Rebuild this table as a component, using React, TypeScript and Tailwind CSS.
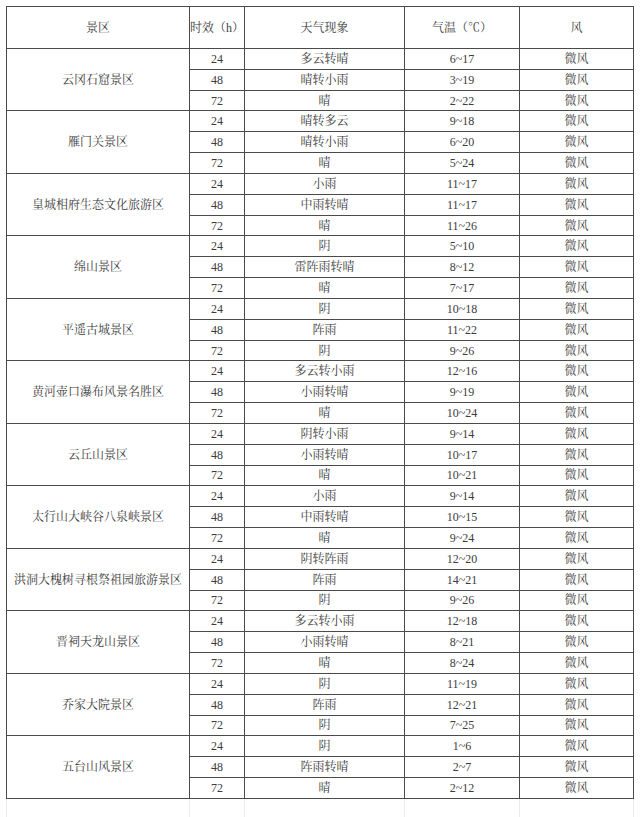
const rows: [string, [string, string][]][] = [
  ['云冈石窟景区', [['多云转晴', '6~17'], ['晴转小雨', '3~19'], ['晴', '2~22']]],
  ['雁门关景区', [['晴转多云', '9~18'], ['晴转小雨', '6~20'], ['晴', '5~24']]],
  ['皇城相府生态文化旅游区', [['小雨', '11~17'], ['中雨转晴', '11~17'], ['晴', '11~26']]],
  ['绵山景区', [['阴', '5~10'], ['雷阵雨转晴', '8~12'], ['晴', '7~17']]],
  ['平遥古城景区', [['阴', '10~18'], ['阵雨', '11~22'], ['阴', '9~26']]],
  ['黄河壶口瀑布风景名胜区', [['多云转小雨', '12~16'], ['小雨转晴', '9~19'], ['晴', '10~24']]],
  ['云丘山景区', [['阴转小雨', '9~14'], ['小雨转晴', '10~17'], ['晴', '10~21']]],
  ['太行山大峡谷八泉峡景区', [['小雨', '9~14'], ['中雨转晴', '10~15'], ['晴', '9~24']]],
  ['洪洞大槐树寻根祭祖园旅游景区', [['阴转阵雨', '12~20'], ['阵雨', '14~21'], ['阴', '9~26']]],
  ['晋祠天龙山景区', [['多云转小雨', '12~18'], ['小雨转晴', '8~21'], ['晴', '8~24']]],
  ['乔家大院景区', [['阴', '11~19'], ['阵雨', '12~21'], ['阴', '7~25']]],
  ['五台山风景区', [['阴', '1~6'], ['阵雨转晴', '2~7'], ['晴', '2~12']]],
];

const hours = ['24', '48', '72'];

// 景区天气预报表：每个景区 3 行（24/48/72 小时）
export default function App() {
  return (
    <div
      className="min-h-[817px] w-[640px] bg-white pl-[6px] pt-[6px] text-[12px] leading-none text-[#3c3c3c]"
      style={{ fontFamily: '"Liberation Serif", "Noto Serif CJK SC", "Noto Sans CJK SC", serif' }}
    >
      <div className="w-[628px] border-l border-r border-t border-[#4a4a4a]">
        <div className="flex h-[42px] border-b border-[#4a4a4a]">
          <Cell w="w-[183px]">景区</Cell>
          <Cell w="w-[55px]">时效（h）</Cell>
          <Cell w="w-[160px]">天气现象</Cell>
          <Cell w="w-[115px]">气温（℃）</Cell>
          <Cell w="w-[113px]" last>风</Cell>
        </div>
        {rows.map(([name, days]) => (
          <div key={name} className="flex">
            <div className="flex w-[183px] shrink-0 items-center justify-center border-b border-r border-[#4a4a4a]">
              {name}
            </div>
            <div className="flex flex-1 flex-col">
              {days.map(([wx, temp], i) => (
                <div key={i} className="flex h-[20.83px] border-b border-[#4a4a4a]">
                  <Cell w="w-[55px]">{hours[i]}</Cell>
                  <Cell w="w-[160px]">{wx}</Cell>
                  <Cell w="w-[115px]">{temp}</Cell>
                  <Cell w="w-[113px]" last>微风</Cell>
                </div>
              ))}
            </div>
          </div>
        ))}
      </div>
      {/* 下方残留的浅色网格线 */}
      <div className="flex h-[18px] w-[628px] border-l border-r border-[#ececec]">
        <div className="w-[183px] border-r border-[#ececec]" />
        <div className="w-[55px] border-r border-[#ececec]" />
        <div className="w-[160px] border-r border-[#ececec]" />
        <div className="w-[115px] border-r border-[#ececec]" />
      </div>
    </div>
  );
}

function Cell({ w, last, children }: { w: string; last?: boolean; children: React.ReactNode }) {
  return (
    <div
      className={
        'flex shrink-0 items-center justify-center whitespace-nowrap ' +
        w +
        (last ? '' : ' border-r border-[#4a4a4a]')
      }
    >
      {children}
    </div>
  );
}
